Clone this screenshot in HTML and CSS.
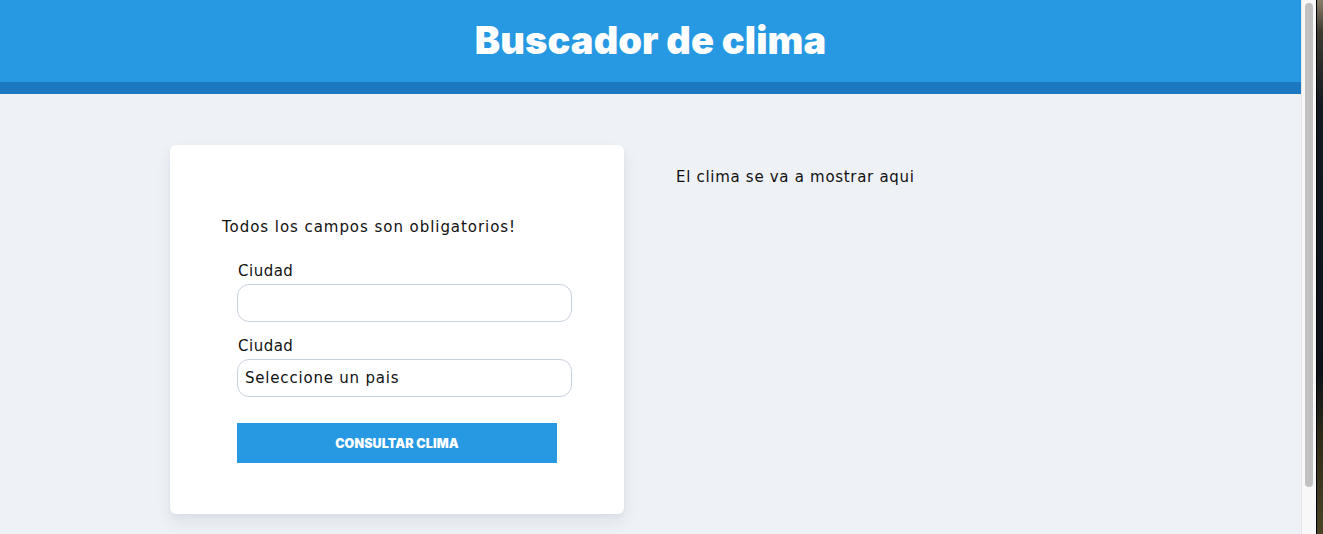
FILE: index.html
```html
<!DOCTYPE html>
<html lang="es">
<head>
<meta charset="utf-8">
<title>Buscador de clima</title>
<link rel="stylesheet" href="styles.css">
</head>
<body>
<div class="window">
  <div class="page">
    <header class="header">
      <h1 class="title">Buscador de clima</h1>
    </header>
    <main class="content">
      <section class="card">
        <p class="notice">Todos los campos son obligatorios!</p>
        <form class="form">
          <div class="field">
            <label class="label" for="ciudad">Ciudad</label>
            <input class="input" id="ciudad" type="text">
          </div>
          <div class="field">
            <label class="label" for="pais">Ciudad</label>
            <div class="input select" id="pais">Seleccione un pais</div>
          </div>
          <button class="button" type="button">CONSULTAR CLIMA</button>
        </form>
      </section>
      <p class="result">El clima se va a mostrar aqui</p>
    </main>
  </div>
  <div class="scrollbar"><div class="thumb"></div></div>
  <div class="desktop"></div>
</div>
</body>
</html>
```
FILE: styles.css
```css
* { box-sizing: border-box; }
html, body { margin: 0; padding: 0; height: 100%; overflow: hidden; }
body { font-family: "DejaVu Sans", sans-serif; color: #111; }
.window { display: flex; height: 534px; }
.page { width: 1301px; background: #eef2f7; flex: none; }
.header {
  background: #2699e2;
  border-bottom: 12px solid #1c78c0;
  height: 94px;
  display: flex;
  justify-content: center;
  align-items: center;
  padding-bottom: 2px;
}
.title {
  margin: 0;
  color: #fff;
  font-family: "Inter", sans-serif;
  font-weight: 900;
  font-size: 38px;
  letter-spacing: 0.1px;
}
.content {
  display: flex;
  align-items: flex-start;
  gap: 52px;
  padding: 51px 0 0 170px;
}
.card {
  width: 454px;
  height: 369px;
  background: #fff;
  border-radius: 6px;
  box-shadow: 0 8px 16px rgba(30, 40, 60, 0.08), 0 2px 4px rgba(30,40,60,0.04);
  padding: 70px 52px 0 52px;
}
.notice { margin: 0; font-size: 15px; line-height: 24px; letter-spacing: 0.95px; }
.form { padding: 20px 0 0 15px; display: flex; flex-direction: column; }
.field { display: flex; flex-direction: column; margin-bottom: 12px; }
.label { font-size: 15px; line-height: 24px; margin-bottom: 1px; padding-left: 1px; letter-spacing: 0.5px; }
.input {
  height: 38px;
  width: 335px;
  border: 1px solid #c8d1de;
  border-radius: 12px;
  background: #fff;
  font-family: inherit;
  font-size: 15px;
  letter-spacing: 0.8px;
  padding: 0 7px;
}
.select { display: flex; align-items: center; color: #111; }
.button {
  margin-top: 14px;
  width: 320px;
  height: 40px;
  background: #2699e2;
  border: none;
  color: #fff;
  font-family: "Inter", sans-serif;
  font-weight: 900;
  font-size: 12.5px;
  letter-spacing: 0.1px;
  padding: 0;
}
.result { margin: 22px 0 0; font-size: 15px; line-height: 20px; letter-spacing: 0.7px; }
.scrollbar {
  width: 15px;
  background: #f8f8f8;
  border-left: 1px solid #e6e6e6;
  padding: 3px 3px 0 3px;
  flex: none;
}
.thumb { width: 8px; height: 484px; background: #c1c1c1; border-radius: 4px; }
.desktop {
  flex: 1;
  border-left: 1px solid #000;
  background: linear-gradient(#8a7e6a 0%, #3d3a30 6%, #111820 20%, #0c1218 70%, #2e2a18 82%, #4a4426 100%);
}
```
